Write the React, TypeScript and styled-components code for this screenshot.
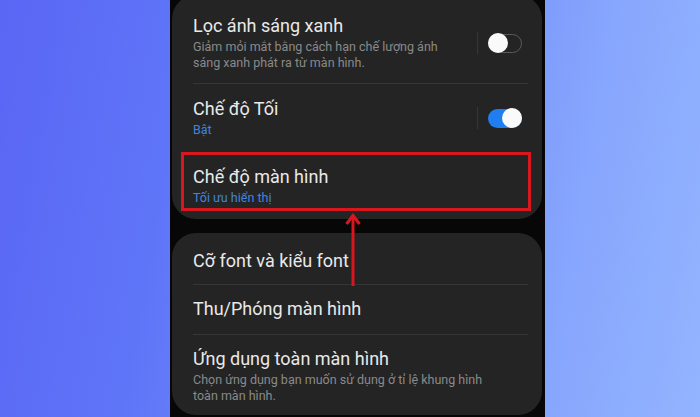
import React from "react";
import styled, { createGlobalStyle } from "styled-components";

const GlobalStyle = createGlobalStyle`
    html, body {
        margin: 0;
        padding: 0;
    }
    body {
        font-family: Roboto, "Noto Sans", "Liberation Sans", sans-serif;
    }
`;

type RowData = {
    title: string;
    sub?: string;
    blue?: boolean;
    toggle?: "on" | "off";
    top?: number;
    bottom?: number;
};

const topItems: RowData[] = [
    {
        title: "Lọc ánh sáng xanh",
        sub: "Giảm mỏi mắt bằng cách hạn chế lượng ánh sáng xanh phát ra từ màn hình.",
        toggle: "off",
    },
    { title: "Chế độ Tối", sub: "Bật", blue: true, toggle: "on", top: 14, bottom: 14 },
    { title: "Chế độ màn hình", sub: "Tối ưu hiển thị", blue: true, top: 14, bottom: 13 },
];

const bottomItems: RowData[] = [
    { title: "Cỡ font và kiểu font" },
    { title: "Thu/Phóng màn hình", bottom: 14 },
    {
        title: "Ứng dụng toàn màn hình",
        sub: "Chọn ứng dụng bạn muốn sử dụng ở tỉ lệ khung hình toàn màn hình.",
        bottom: 11,
    },
];

const Item = ({ item, last }: { item: RowData; last: boolean }) => (
    <>
        <Row $top={item.top ?? 13} $bottom={item.bottom ?? 12}>
            <TextCol $narrow={!!item.toggle}>
                <Title>{item.title}</Title>
                {item.sub && <Sub $blue={item.blue}>{item.sub}</Sub>}
            </TextCol>
            {item.toggle && (
                <ToggleArea>
                    <Separator />
                    <Switch $on={item.toggle === "on"}>
                        <Knob $on={item.toggle === "on"} />
                    </Switch>
                </ToggleArea>
            )}
        </Row>
        {!last && item.toggle !== "on" && <Divider />}
    </>
);

const App = () => {
    return (
        <Page>
            <GlobalStyle />
            <Phone>
                <Card $first>
                    {topItems.map((item, i) => (
                        <Item key={item.title} item={item} last={i === topItems.length - 1} />
                    ))}
                </Card>
                <Card>
                    {bottomItems.map((item, i) => (
                        <Item key={item.title} item={item} last={i === bottomItems.length - 1} />
                    ))}
                </Card>
                <Highlight />
                <Arrow width="20" height="76" viewBox="0 0 20 76">
                    <line x1="10" y1="3" x2="10" y2="74" stroke="#d9161d" strokeWidth="3" />
                    <polyline
                        points="3.5,12 10,3.5 16.5,12"
                        fill="none"
                        stroke="#d9161d"
                        strokeWidth="3"
                        strokeLinejoin="miter"
                    />
                </Arrow>
            </Phone>
        </Page>
    );
};

export default App;

const Page = styled.div`
    width: 700px;
    height: 417px;
    overflow: hidden;
    display: flex;
    padding-left: 170px;
    box-sizing: border-box;
    background: linear-gradient(100deg, #5a66f4 0%, #5f75f8 25%, #718efb 55%, #87a6fd 80%, #93b4ff 100%);
`;

const Phone = styled.div`
    position: relative;
    width: 375px;
    height: 417px;
    background: #070707;
    display: flex;
    flex-direction: column;
    gap: 14px;
    padding: 0 3px 0 2px;
    box-sizing: border-box;
`;

const Card = styled.div<{ $first?: boolean }>`
    background: #242424;
    border-radius: 24px;
    margin-top: ${(p) => (p.$first ? "-5px" : "0")};
    padding-top: ${(p) => (p.$first ? "7px" : "4px")};
    display: flex;
    flex-direction: column;
`;

const Row = styled.div<{ $top: number; $bottom: number }>`
    display: flex;
    align-items: center;
    padding: ${(p) => p.$top}px 20px ${(p) => p.$bottom}px 21px;
`;

const TextCol = styled.div<{ $narrow: boolean }>`
    flex: 1;
    display: flex;
    flex-direction: column;
    max-width: ${(p) => (p.$narrow ? "268px" : "300px")};
`;

const Title = styled.div`
    font-size: 18px;
    line-height: 22px;
    color: #e9e9e9;
    white-space: nowrap;
`;

const Sub = styled.div<{ $blue?: boolean }>`
    margin-top: 2px;
    font-size: 12.5px;
    line-height: 16px;
    color: ${(p) => (p.$blue ? "#4284dc" : "#8a8a8a")};
`;

const ToggleArea = styled.div`
    display: flex;
    align-items: center;
    gap: 10px;
    margin-left: auto;
`;

const Separator = styled.div`
    width: 1px;
    height: 22px;
    background: #363636;
`;

const Switch = styled.div<{ $on: boolean }>`
    position: relative;
    width: 34px;
    height: 19px;
    border-radius: 10px;
    box-sizing: border-box;
    background: ${(p) => (p.$on ? "#1f7ff1" : "transparent")};
    border: ${(p) => (p.$on ? "none" : "1.5px solid #5a5a5a")};
`;

const Knob = styled.div<{ $on: boolean }>`
    position: absolute;
    top: 50%;
    width: 20px;
    height: 20px;
    margin-top: -10px;
    border-radius: 50%;
    background: #fafafa;
    left: ${(p) => (p.$on ? "auto" : "-1px")};
    right: ${(p) => (p.$on ? "0" : "auto")};
`;

const Divider = styled.div`
    height: 1px;
    margin: 0 14px 0 21px;
    background: #363636;
`;

const Highlight = styled.div`
    position: absolute;
    left: 11px;
    top: 152px;
    width: 350px;
    height: 59px;
    box-sizing: border-box;
    border: 3px solid #d9161d;
`;

const Arrow = styled.svg`
    position: absolute;
    left: 173px;
    top: 212px;
`;
